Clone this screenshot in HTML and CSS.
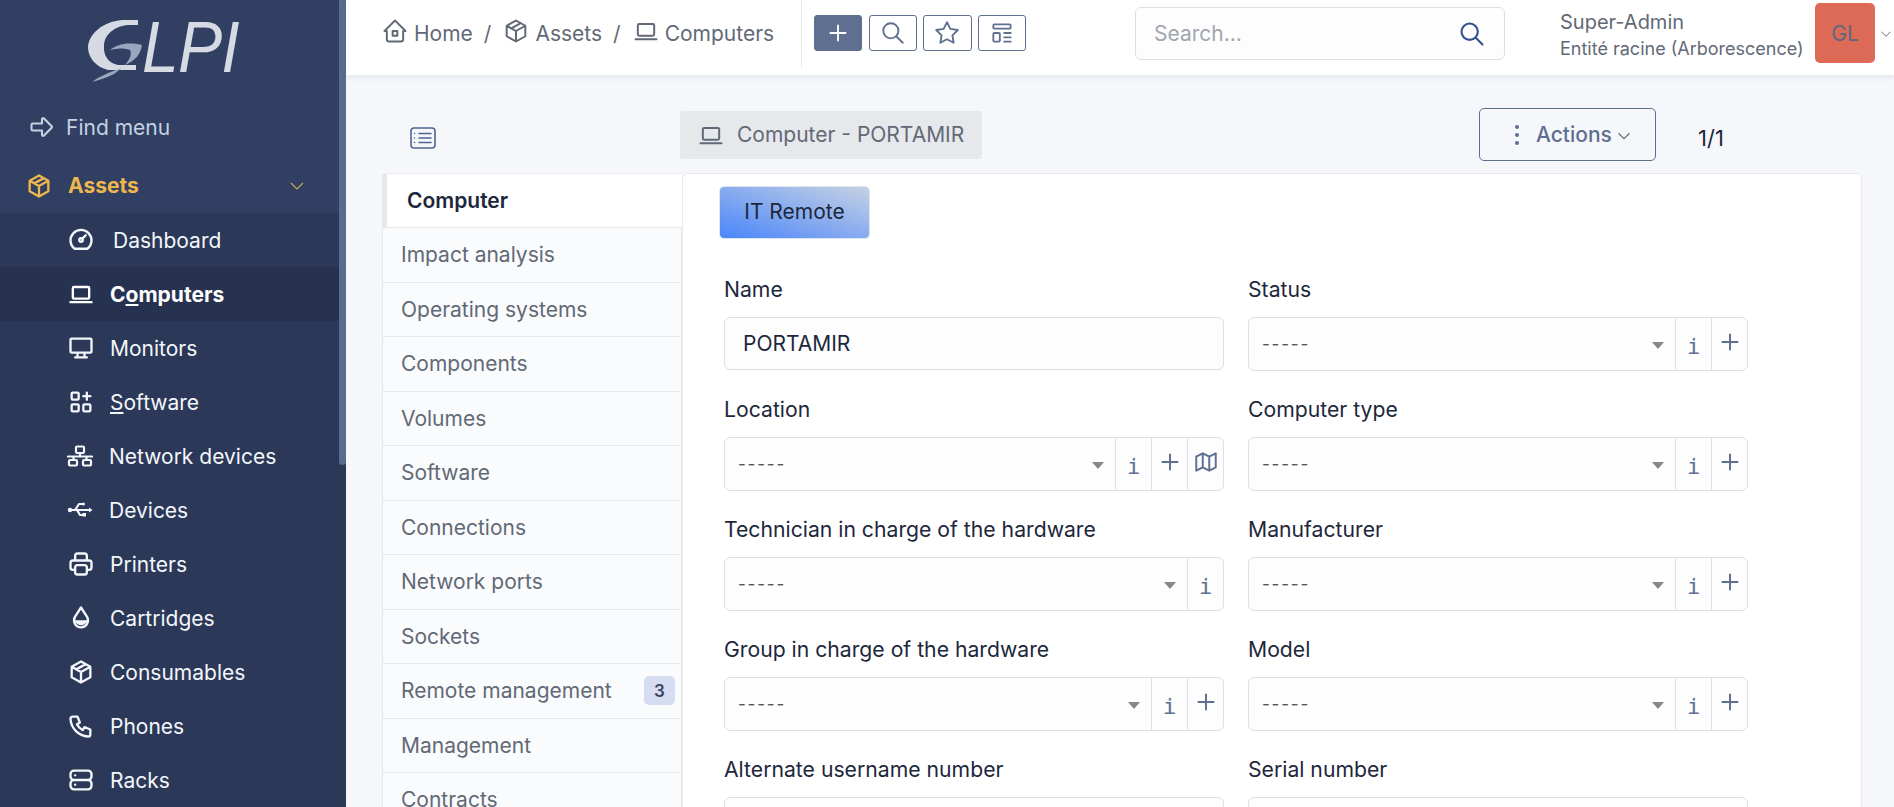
FILE: index.html
```html
<!DOCTYPE html>
<html lang="en">
<head>
<meta charset="utf-8">
<title>Computer - PORTAMIR - GLPI</title>
<link rel="stylesheet" href="styles.css">
</head>
<body>
<svg class="defs" width="0" height="0" aria-hidden="true">
  <symbol id="i-laptop" viewBox="0 0 24 24"><path d="M3 19h18M6 6h12a1 1 0 0 1 1 1v8a1 1 0 0 1-1 1H6a1 1 0 0 1-1-1V7a1 1 0 0 1 1-1z"/></symbol>
  <symbol id="i-package" viewBox="0 0 24 24"><path d="M12 3l8 4.500v9L12 21l-8-4.500v-9L12 3M12 12l8-4.500M12 12v9M12 12L4 7.500M16 5.250l-8 4.500"/></symbol>
  <symbol id="i-home" viewBox="0 0 24 24"><path d="M5 12H3l9-9 9 9h-2M5 12v7a2 2 0 0 0 2 2h10a2 2 0 0 0 2-2v-7M10 12h4v4h-4z"/></symbol>
  <symbol id="i-plus" viewBox="0 0 24 24"><path d="M12 5v14M5 12h14"/></symbol>
  <symbol id="i-search" viewBox="0 0 24 24"><path d="M3 10a7 7 0 1 0 14 0a7 7 0 1 0-14 0M21 21l-6-6"/></symbol>
  <symbol id="i-chevron" viewBox="0 0 24 24"><path d="M6 9l6 6 6-6"/></symbol>
</svg>

<aside class="sidebar">
  <div class="logo">
    <svg class="logo-g" viewBox="0 0 62 64" aria-hidden="true">
      <path class="g-main" d="M50 0H34C14 2 1 14 0 27c0 11 8 20 20 23h28v-5H30c-10-2-15-10-14-20C17 13 28 6 40 5h10z"/>
      <path class="g-swoosh" d="M22 30c8-6 17-8 32-5-1 9-7 16-17 20 5-6 7-11 5-15-6-2-13-2-20 0zM4 62c8-6 18-10 30-14l-8 6C18 58 11 60 4 62z"/>
    </svg>
    <span class="logo-text">LPI</span>
  </div>
  <a class="nav-top find"><svg class="ico" viewBox="0 0 24 24"><path d="M4 9h8V5.400a1 1 0 0 1 1.700-.7l6.600 6.600a1 1 0 0 1 0 1.400l-6.600 6.600a1 1 0 0 1-1.700-.7V15H4a1 1 0 0 1-1-1v-4a1 1 0 0 1 1-1z"/></svg><span>Find menu</span></a>
  <a class="nav-top assets"><svg class="ico"><use href="#i-package"/></svg><span>Assets</span><svg class="nav-chev"><use href="#i-chevron"/></svg></a>
  <nav class="submenu">
    <a class="nav-item dash"><svg class="ico" viewBox="0 0 24 24"><path d="M6.500 19.500a9 9 0 1 1 11 0zM13.400 10.600L16 8"/><circle cx="12" cy="12" r="1.500"/></svg><span>Dashboard</span></a>
    <a class="nav-item active"><svg class="ico"><use href="#i-laptop"/></svg><span>C<u>o</u>mputers</span></a>
    <a class="nav-item"><svg class="ico" viewBox="0 0 24 24"><path d="M3 5a1 1 0 0 1 1-1h16a1 1 0 0 1 1 1v10a1 1 0 0 1-1 1H4a1 1 0 0 1-1-1zM7 20h10M9 16v4M15 16v4"/></svg><span>Monitors</span></a>
    <a class="nav-item"><svg class="ico" viewBox="0 0 24 24"><path d="M5 4h4a1 1 0 0 1 1 1v4a1 1 0 0 1-1 1H5a1 1 0 0 1-1-1V5a1 1 0 0 1 1-1zM5 14h4a1 1 0 0 1 1 1v4a1 1 0 0 1-1 1H5a1 1 0 0 1-1-1v-4a1 1 0 0 1 1-1zM15 14h4a1 1 0 0 1 1 1v4a1 1 0 0 1-1 1h-4a1 1 0 0 1-1-1v-4a1 1 0 0 1 1-1zM14 7h6M17 4v6"/></svg><span><u>S</u>oftware</span></a>
    <a class="nav-item wide"><svg class="ico" viewBox="0 0 26 24"><path d="M10 2.500h6a1 1 0 0 1 1 1V8a1 1 0 0 1-1 1h-6a1 1 0 0 1-1-1V3.500a1 1 0 0 1 1-1zM13 9v3.500M1 12.500h24M6.500 12.500V16M19.500 12.500V16M3 16h6a1 1 0 0 1 1 1v3.500a1 1 0 0 1-1 1H3a1 1 0 0 1-1-1V17a1 1 0 0 1 1-1zM17 16h6a1 1 0 0 1 1 1v3.500a1 1 0 0 1-1 1h-6a1 1 0 0 1-1-1V17a1 1 0 0 1 1-1z"/></svg><span>Network devices</span></a>
    <a class="nav-item wide"><svg class="ico" viewBox="0 0 26 24"><path d="M3 12h20M8 12l4-6h3M10 12l3 5h3"/><circle class="solid" cx="3" cy="12" r="2.200"/><circle class="solid" cx="16.500" cy="6" r="1.500"/><path class="solid" d="M15.500 15h3.500v3.500h-3.500zM22 9.500l3.500 2.500-3.500 2.500z"/></svg><span>Devices</span></a>
    <a class="nav-item"><svg class="ico" viewBox="0 0 24 24"><path d="M17 17h2a2 2 0 0 0 2-2v-4a2 2 0 0 0-2-2H5a2 2 0 0 0-2 2v4a2 2 0 0 0 2 2h2M17 9V5a2 2 0 0 0-2-2H9a2 2 0 0 0-2 2v4M9 13h6a2 2 0 0 1 2 2v4a2 2 0 0 1-2 2H9a2 2 0 0 1-2-2v-4a2 2 0 0 1 2-2z"/></svg><span>Printers</span></a>
    <a class="nav-item"><svg class="ico" viewBox="0 0 24 24"><path class="solid" d="M6.300 14h11.400a6 6 0 0 1-11.400 0z"/><path d="M6.800 11a6 6 0 1 0 10.400 0L12 3z"/></svg><span>Cartridges</span></a>
    <a class="nav-item"><svg class="ico"><use href="#i-package"/></svg><span>Consumables</span></a>
    <a class="nav-item"><svg class="ico" viewBox="0 0 24 24"><path d="M5 4h4l2 5-2.500 1.500a11 11 0 0 0 5 5L15 13l5 2v4a2 2 0 0 1-2 2A16 16 0 0 1 3 6a2 2 0 0 1 2-2"/></svg><span>Phones</span></a>
    <a class="nav-item"><svg class="ico" viewBox="0 0 24 24"><path d="M6 4h12a3 3 0 0 1 3 3v2a3 3 0 0 1-3 3H6a3 3 0 0 1-3-3V7a3 3 0 0 1 3-3zM6 12h12a3 3 0 0 1 3 3v2a3 3 0 0 1-3 3H6a3 3 0 0 1-3-3v-2a3 3 0 0 1 3-3zM7 8v.01M7 16v.01"/></svg><span>Racks</span></a>
  </nav>
  <div class="scroll-thumb"></div>
</aside>

<div class="main">
  <header class="topbar">
    <div class="crumbs">
      <a class="crumb"><svg class="ico"><use href="#i-home"/></svg>Home</a>
      <span class="sep">/</span>
      <a class="crumb"><svg class="ico"><use href="#i-package"/></svg>Assets</a>
      <span class="sep">/</span>
      <a class="crumb"><svg class="ico"><use href="#i-laptop"/></svg>Computers</a>
    </div>
    <div class="tools">
      <button class="tool primary"><svg class="ico"><use href="#i-plus"/></svg></button>
      <button class="tool"><svg class="ico"><use href="#i-search"/></svg></button>
      <button class="tool"><svg class="ico" viewBox="0 0 24 24"><path d="M12 17.750l-6.170 3.250 1.180-6.880-5-4.870 6.900-1L12 2l3.090 6.250 6.900 1-5 4.870 1.180 6.880z"/></svg></button>
      <button class="tool"><svg class="ico" viewBox="0 0 24 24"><path d="M5 4h14a1 1 0 0 1 1 1v2a1 1 0 0 1-1 1H5a1 1 0 0 1-1-1V5a1 1 0 0 1 1-1zM5 12h4a1 1 0 0 1 1 1v6a1 1 0 0 1-1 1H5a1 1 0 0 1-1-1v-6a1 1 0 0 1 1-1zM14 12h6M14 16h6M14 20h6"/></svg></button>
    </div>
    <div class="searchbox">
      <span class="placeholder">Search...</span>
      <svg class="ico"><use href="#i-search"/></svg>
    </div>
    <div class="user">
      <div class="user-name">Super-Admin</div>
      <div class="user-entity">Entité racine (Arborescence)</div>
    </div>
    <div class="avatar">GL</div>
    <svg class="user-chev"><use href="#i-chevron"/></svg>
  </header>

  <div class="page">
    <div class="title-row">
      <div class="title-left">
        <svg class="ico list-ico" viewBox="0 0 26 22"><rect x="1" y="1" width="24" height="20" rx="3"/><path d="M9 6.500h12M9 11h12M9 15.500h12M4.500 6.500v.01M4.500 11v.01M4.500 15.500v.01"/></svg>
      </div>
      <div class="pill"><svg class="ico"><use href="#i-laptop"/></svg>Computer - PORTAMIR</div>
      <button class="actions">
        <svg class="dots" viewBox="0 0 6 22"><circle cx="3" cy="3" r="2"/><circle cx="3" cy="11" r="2"/><circle cx="3" cy="19" r="2"/></svg>
        Actions
        <svg class="act-chev"><use href="#i-chevron"/></svg>
      </button>
      <span class="pager">1/1</span>
    </div>

    <div class="workspace">
      <ul class="tabs">
        <li class="tab current">Computer</li>
        <li class="tab">Impact analysis</li>
        <li class="tab">Operating systems</li>
        <li class="tab">Components</li>
        <li class="tab">Volumes</li>
        <li class="tab">Software</li>
        <li class="tab">Connections</li>
        <li class="tab">Network ports</li>
        <li class="tab">Sockets</li>
        <li class="tab">Remote management<span class="badge">3</span></li>
        <li class="tab">Management</li>
        <li class="tab">Contracts</li>
      </ul>
      <section class="card">
        <button class="remote">IT Remote</button>
        <div class="form">
          <div class="field"><label>Name</label><div class="input">PORTAMIR</div></div>
          <div class="field"><label>Status</label><div class="select"><span class="val">-----</span><i class="arrow"></i><span class="add mono">i</span><span class="add"><svg class="ico"><use href="#i-plus"/></svg></span></div></div>
          <div class="field"><label>Location</label><div class="select"><span class="val">-----</span><i class="arrow"></i><span class="add mono">i</span><span class="add"><svg class="ico"><use href="#i-plus"/></svg></span><span class="add"><svg class="ico" viewBox="0 0 24 24"><path d="M3 7l6-3 6 3 6-3v13l-6 3-6-3-6 3V7M9 4v13M15 7v13"/></svg></span></div></div>
          <div class="field"><label>Computer type</label><div class="select"><span class="val">-----</span><i class="arrow"></i><span class="add mono">i</span><span class="add"><svg class="ico"><use href="#i-plus"/></svg></span></div></div>
          <div class="field"><label>Technician in charge of the hardware</label><div class="select"><span class="val">-----</span><i class="arrow"></i><span class="add mono">i</span></div></div>
          <div class="field"><label>Manufacturer</label><div class="select"><span class="val">-----</span><i class="arrow"></i><span class="add mono">i</span><span class="add"><svg class="ico"><use href="#i-plus"/></svg></span></div></div>
          <div class="field"><label>Group in charge of the hardware</label><div class="select"><span class="val">-----</span><i class="arrow"></i><span class="add mono">i</span><span class="add"><svg class="ico"><use href="#i-plus"/></svg></span></div></div>
          <div class="field"><label>Model</label><div class="select"><span class="val">-----</span><i class="arrow"></i><span class="add mono">i</span><span class="add"><svg class="ico"><use href="#i-plus"/></svg></span></div></div>
          <div class="field"><label>Alternate username number</label><div class="input"></div></div>
          <div class="field"><label>Serial number</label><div class="input"></div></div>
        </div>
      </section>
    </div>
  </div>
</div>
</body>
</html>
```
FILE: styles.css
```css
* { box-sizing: border-box; }
html, body { margin: 0; height: 100%; overflow: hidden; }
body {
  display: flex;
  font-family: Inter, "Liberation Sans", sans-serif;
  font-size: 21px;
  color: #1d273b;
  background: #f5f7fb;
}
.defs { position: absolute; }
.ico {
  fill: none;
  stroke: currentColor;
  stroke-width: 2;
  stroke-linecap: round;
  stroke-linejoin: round;
  flex: none;
}
.ico .solid { fill: currentColor; stroke: none; }

/* sidebar */
.sidebar {
  position: relative;
  flex: none;
  width: 346px;
  height: 100vh;
  background: #303f62;
  overflow: hidden;
}
.logo {
  height: 100px;
  padding: 20px 0 0 88px;
  display: flex;
  align-items: flex-start;
  color: #d5dae3;
}
.logo-g { width: 62px; height: 64px; flex: none; }
.g-main { fill: #d5dae3; }
.g-swoosh { fill: #9aa6bd; }
.logo-text {
  margin-left: -8px;
  font-family: "Liberation Sans", sans-serif;
  font-style: italic;
  font-size: 72px;
  line-height: 54px;
  letter-spacing: -1px;
  transform: scaleX(0.92);
  transform-origin: left top;
}
.nav-top {
  display: flex;
  align-items: center;
  height: 54px;
  padding-left: 25px;
}
.nav-top .ico { width: 28px; height: 28px; }
.find { color: #c6d1e2; }
.find .ico { margin: 0 10px 0 3px; stroke-width: 1.800; }
.assets {
  margin-top: 4px;
  height: 55px;
  color: #eeb74e;
  font-weight: 700;
}
.assets .ico { margin-right: 15px; }
.nav-chev {
  width: 24px;
  height: 24px;
  margin-left: auto;
  margin-right: 37px;
  fill: none;
  stroke: #c6a858;
  stroke-width: 1.200;
}
.submenu { background: #2b3857; }
.nav-item {
  display: flex;
  align-items: center;
  height: 54px;
  padding-left: 67px;
  color: #f3f6fb;
}
.nav-item .ico { width: 28px; height: 28px; margin-right: 15px; }
.nav-item.dash .ico { margin-right: 18px; }
.nav-item.wide { padding-left: 67px; }
.nav-item.wide .ico { width: 26px; height: 24px; margin-right: 16px; stroke-width: 2.200; }
.nav-item.active { background: #263250; font-weight: 700; color: #fff; }
.scroll-thumb {
  position: absolute;
  top: 0;
  right: 0;
  width: 7px;
  height: 465px;
  background: #5b6b8f;
  border-radius: 0 0 4px 4px;
}

/* main */
.main {
  flex: 1;
  min-width: 0;
  display: flex;
  flex-direction: column;
}
.topbar {
  flex: none;
  height: 75px;
  display: flex;
  align-items: flex-start;
  background: #fff;
  box-shadow: 0 2px 6px rgba(40, 50, 80, 0.1);
  position: relative;
  z-index: 1;
}
.crumbs {
  flex: none;
  width: 456px;
  height: 68px;
  padding: 0 0 2px 35px;
  display: flex;
  align-items: center;
  border-right: 1px solid #e6e8eb;
  color: #626976;
}
.crumb { display: flex; align-items: center; }
.crumb .ico { width: 28px; height: 28px; margin-right: 5px; stroke-width: 1.700; margin-top: -4px; }
.sep { margin: 0 11px; }
.tools { display: flex; gap: 6.500px; margin: 15px 0 0 12px; }
.tool {
  width: 48.200px;
  height: 36px;
  padding: 0;
  display: flex;
  align-items: center;
  justify-content: center;
  background: #fff;
  border: 1px solid #5f6f90;
  border-radius: 3px;
  color: #5f6f90;
}
.tool .ico { width: 26px; height: 26px; stroke-width: 1.700; }
.tool.primary { background: #5f6f90; color: #fff; }
.searchbox {
  flex: none;
  width: 370px;
  height: 53px;
  margin: 7px 0 0 auto;
  padding: 0 18px 0 18px;
  display: flex;
  align-items: center;
  justify-content: space-between;
  background: #fdfdfe;
  border: 1px solid #dcdfe4;
  border-radius: 6px;
}
.placeholder { color: #a2a6ae; }
.searchbox .ico { width: 28px; height: 28px; color: #34508f; stroke-width: 1.800; }
.user { flex: none; margin: 8px 0 0 55px; width: 255px; color: #626976; }
.user-name { font-size: 20px; line-height: 28px; }
.user-entity { font-size: 18px; line-height: 26px; white-space: nowrap; }
.avatar {
  flex: none;
  width: 60px;
  height: 60px;
  margin-top: 3px;
  display: flex;
  align-items: center;
  justify-content: center;
  background: #dd6a56;
  border-radius: 5px;
  color: #5c6880;
}
.user-chev {
  flex: none;
  width: 18px;
  height: 18px;
  margin: 25px -1px 0 2px;
  fill: none;
  stroke: #626976;
  stroke-width: 1.300;
}

/* page */
.page { flex: 1; min-height: 0; padding: 33px 32px 0 36px; overflow: hidden; }
.title-row {
  display: flex;
  align-items: center;
  height: 53px;
  margin-bottom: 12px;
}
.title-left { flex: none; width: 298px; padding: 6px 0 0 28px; }
.list-ico { display: block; width: 26px; height: 22px; color: #4f6691; stroke-width: 1.600; }
.pill {
  display: flex;
  align-items: center;
  height: 48px;
  padding: 0 18px 0 17px;
  background: #e6e8ec;
  border-radius: 3px;
  color: #626976;
  white-space: nowrap;
}
.pill .ico { width: 28px; height: 28px; margin-right: 12px; stroke-width: 1.700; }
.actions {
  display: flex;
  align-items: center;
  width: 177px;
  height: 53px;
  margin-left: auto;
  padding: 0 0 0 34px;
  background: transparent;
  border: 1px solid #5f6f90;
  border-radius: 5px;
  color: #5f6f90;
  font: inherit;
  font-weight: 500;
}
.dots { width: 6px; height: 22px; margin-right: 16px; fill: #5f6f90; flex: none; }
.act-chev { width: 22px; height: 22px; margin: 2px 0 0 1px; fill: none; stroke: #626976; stroke-width: 1.200; flex: none; }
.pager { flex: none; width: 27px; margin: 6px 137px 0 42px; white-space: nowrap; font-size: 22px; }

.workspace { display: flex; align-items: flex-start; }
.tabs {
  flex: none;
  width: 300px;
  margin: 0;
  padding: 0;
  list-style: none;
  color: #626976;
  background: #fafbfd;
  border-right: 1px solid #e6e8eb;
}
.tab {
  display: flex;
  align-items: center;
  height: 54.500px;
  padding-left: 18px;
  border-left: 1px solid #e6e8eb;
  border-bottom: 1px solid #e6e8eb;
  position: relative;
  white-space: nowrap;
}
.tab.current {
  height: 55px;
  padding-left: 20px;
  background: #fff;
  color: #1d273b;
  font-weight: 600;
  border-left: 5px solid #e6e7e9;
  border-top: 1px solid #eceef1;
  border-right: 0;
  border-radius: 4px 0 0 0;
  margin-right: -1px;
}
.badge {
  position: absolute;
  right: 6px;
  top: 12px;
  width: 31px;
  height: 29px;
  display: flex;
  align-items: center;
  justify-content: center;
  background: #d6ddf2;
  border-radius: 5px;
  color: #3b465e;
  font-size: 17px;
  font-weight: 600;
}
.card {
  flex: none;
  width: 1180px;
  height: 800px;
  padding: 12px 0 0 36px;
  background: #fff;
  border: 1px solid #e8eaee;
  border-radius: 6px;
}
.remote {
  display: block;
  width: 151px;
  height: 53px;
  padding: 0 0 2px;
  background: linear-gradient(to top right, #4a85fa, #c6d2e4);
  border: 1px solid #dfe5ee;
  border-radius: 5px;
  color: #1d273b;
  font: inherit;
}
.form {
  display: grid;
  grid-template-columns: 500px 500px;
  grid-auto-rows: 120px;
  column-gap: 24px;
  margin: 36px 0 0 5px;
}
.field label { display: block; height: 28px; line-height: 29px; margin-bottom: 14px; font-size: 21.200px; }
.input, .select {
  display: flex;
  align-items: center;
  background: #fdfdfe;
  border: 1px solid #dcdfe4;
  border-radius: 6px;
}
.input { height: 53px; padding-left: 18px; }
.select { height: 54px; color: #555; }
.val {
  flex: 1;
  padding-left: 13px;
  letter-spacing: 1.800px;
  font-size: 17px;
}
.arrow {
  flex: none;
  width: 0;
  height: 0;
  margin: 3px 11px 0 0;
  border-left: 6px solid transparent;
  border-right: 6px solid transparent;
  border-top: 7px solid #888;
}
.add {
  flex: none;
  width: 36px;
  height: 100%;
  display: flex;
  align-items: center;
  justify-content: center;
  border-left: 1px solid #dcdfe4;
  color: #5f6f90;
}
.add .ico { width: 26px; height: 26px; margin-top: -4px; stroke-width: 1.800; }
.mono { font-family: "DejaVu Sans Mono", "Liberation Mono", monospace; font-size: 22px; padding-top: 4px; }
```
